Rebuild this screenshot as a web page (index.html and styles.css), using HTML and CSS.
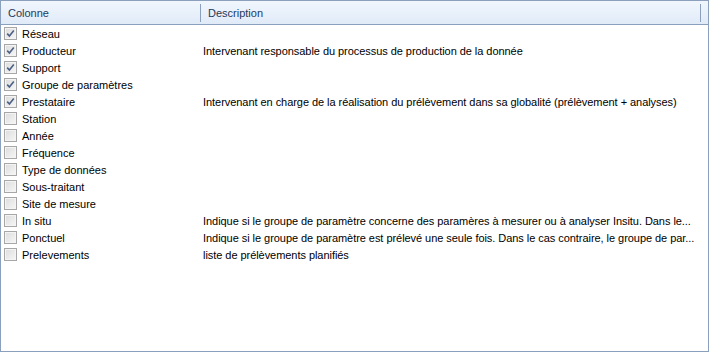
FILE: index.html
```html
<!DOCTYPE html>
<html>
<head>
    <title>Colonnes</title>
    <link rel="stylesheet" href="styles.css">
</head>
<body>
    <div class="grid-view">
        <div class="grid-header">
            <div class="head-cell col-name">Colonne</div>
            <div class="head-cell col-desc">Description</div>
            <div class="head-rest"></div>
        </div>
        <div class="grid-body" id="grid-body"></div>
    </div>

    <script>
        var rows = [
            ['Réseau', true, ''],
            ['Producteur', true, 'Intervenant responsable du processus de production de la donnée'],
            ['Support', true, ''],
            ['Groupe de paramètres', true, ''],
            ['Prestataire', true, 'Intervenant en charge de la réalisation du prélèvement dans sa globalité (prélèvement + analyses)'],
            ['Station', false, ''],
            ['Année', false, ''],
            ['Fréquence', false, ''],
            ['Type de données', false, ''],
            ['Sous-traitant', false, ''],
            ['Site de mesure', false, ''],
            ['In situ', false, 'Indique si le groupe de paramètre concerne des paramères à mesurer ou à analyser Insitu. Dans le...'],
            ['Ponctuel', false, 'Indique si le groupe de paramètre est prélevé une seule fois. Dans le cas contraire, le groupe de par...'],
            ['Prelevements', false, 'liste de prélèvements planifiés']
        ];

        var check = '<svg width="9" height="9" viewBox="0 0 9 9"><path d="M1.2 4.6 L3.4 7 L7.8 1.4" fill="none" stroke="#4d6185" stroke-width="1.6"/></svg>';
        var body = document.getElementById('grid-body');

        rows.forEach(function(r) {
            var row = document.createElement('div');
            row.className = 'grid-row';
            row.innerHTML =
                '<div class="cell col-name"><span class="check-box">' + (r[1] ? check : '') + '</span>' + r[0] + '</div>' +
                '<div class="cell col-desc">' + r[2] + '</div>';
            body.appendChild(row);
        });
    </script>
</body>
</html>
```

FILE: styles.css
```css
body {
  margin: 0;
  font-family: 'Liberation Sans', Arial, sans-serif;
  font-size: 11px;
  color: #000;
  background: #fff;
}

.grid-view {
  box-sizing: border-box;
  width: 709px;
  height: 352px;
  border: 1px solid #8aa0bd;
  background: #fff;
}

.grid-header {
  display: flex;
  height: 23px;
  border-bottom: 1px solid #8aa0bd;
  background: linear-gradient(to bottom, #f1f6fd, #e0ebf8);
}

.head-cell {
  display: flex;
  align-items: center;
  color: #1e395b;
  position: relative;
}

.head-cell::after {
  content: "";
  position: absolute;
  right: 0;
  top: 3px;
  bottom: 2px;
  width: 1px;
  background: #8aa0bd;
}

.head-cell.col-name {
  width: 200px;
  padding-left: 7px;
  box-sizing: border-box;
}

.head-cell.col-desc {
  width: 500px;
  padding-left: 7px;
  box-sizing: border-box;
}

.head-rest {
  flex: 1;
}

.grid-row {
  display: flex;
  height: 17px;
  align-items: center;
}

.cell {
  white-space: nowrap;
  box-sizing: border-box;
}

.cell.col-name {
  width: 201px;
  display: flex;
  align-items: center;
  padding-left: 3px;
}

.cell.col-desc {
  width: 500px;
  padding-left: 1px;
  letter-spacing: -0.05px;
}

.check-box {
  box-sizing: border-box;
  width: 13px;
  height: 13px;
  border: 1px solid #a7a7a7;
  background: linear-gradient(135deg, #dcdcdc, #f7f7f7);
  box-shadow: inset 0 0 0 1px #f4f4f4;
  margin-right: 5px;
  display: flex;
  align-items: center;
  justify-content: center;
}
```
